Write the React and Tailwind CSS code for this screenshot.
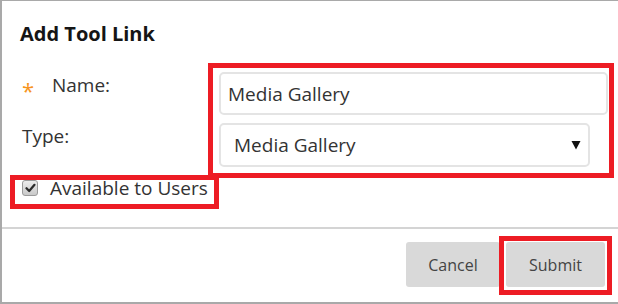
import React from "react";

function Callout({ className }) {
  // red annotation rectangle drawn on top of the form
  return <div className={"absolute border-[5px] border-[#ed1c24] pointer-events-none " + className}></div>;
}

export default function App() {
  return (
    <div className="relative w-[618px] h-[304px] overflow-hidden bg-white border-l-2 border-t border-b-2 border-[#a9a9a9] font-['Open_Sans',sans-serif] text-[#333]">
      <div className="pl-[18px] pt-[20px]">
        <h2 className="text-[20px] leading-[26px] font-bold text-[#151515]">Add Tool Link</h2>

        <div className="mt-[25px] grid grid-cols-[199px_389px] gap-y-[8px]">
          <div className="flex items-start text-[19px] leading-[26px] pl-[2px]">
            <span className="w-[30px] pt-[5px] text-[22px] leading-[26px] text-[#f7941d]">*</span>
            <span>Name:</span>
          </div>
          <input
            readOnly
            defaultValue="Media Gallery"
            className="h-[43px] w-[389px] rounded-[5px] border-2 border-[#e4e4e4] pl-[7px] text-[19px] text-[#333] outline-none"
          />

          <div className="text-[19px] leading-[26px] pl-[2px]">Type:</div>
          <div className="flex h-[44px] w-[371px] items-center justify-between rounded-[5px] border-2 border-[#e4e4e4] pl-[13px] pr-[7px]">
            <span className="text-[19px] leading-[26px]">Media Gallery</span>
            <svg width="10" height="10" viewBox="0 0 10 10">
              <polygon points="0.5,1 9.5,1 5,9.5" fill="#111" />
            </svg>
          </div>
        </div>

        <label className="mt-[8px] flex items-center gap-[12px] pl-[2px] text-[19px] leading-[26px]">
          <span className="flex h-[16px] w-[16px] items-center justify-center rounded-[3px] border border-[#9a9a9a] bg-gradient-to-b from-[#ececec] to-[#c9c9c9]">
            <svg width="11" height="10" viewBox="0 0 11 10">
              <path d="M1.5 5.2 L4.2 8 L9.5 1.8" fill="none" stroke="#2b2b2b" strokeWidth="2.2" strokeLinecap="round" strokeLinejoin="round" />
            </svg>
          </span>
          <span>Available to Users</span>
        </label>
      </div>

      <div className="mt-[26px] h-[2px] bg-[#d4d4d4]"></div>

      <div className="flex justify-end gap-[6px] pt-[13px] pr-[13px]">
        <button className="h-[45px] w-[94px] rounded-[3px] bg-[#d9d9d9] text-[16px] text-[#444]">Cancel</button>
        <button className="h-[45px] w-[99px] rounded-[3px] bg-[#d9d9d9] text-[16px] text-[#444]">Submit</button>
      </div>

      <Callout className="left-[206px] top-[62px] w-[406px] h-[115px]" />
      <Callout className="left-[8px] top-[174px] w-[209px] h-[34px]" />
      <Callout className="left-[497px] top-[235px] w-[113px] h-[59px]" />
    </div>
  );
}
